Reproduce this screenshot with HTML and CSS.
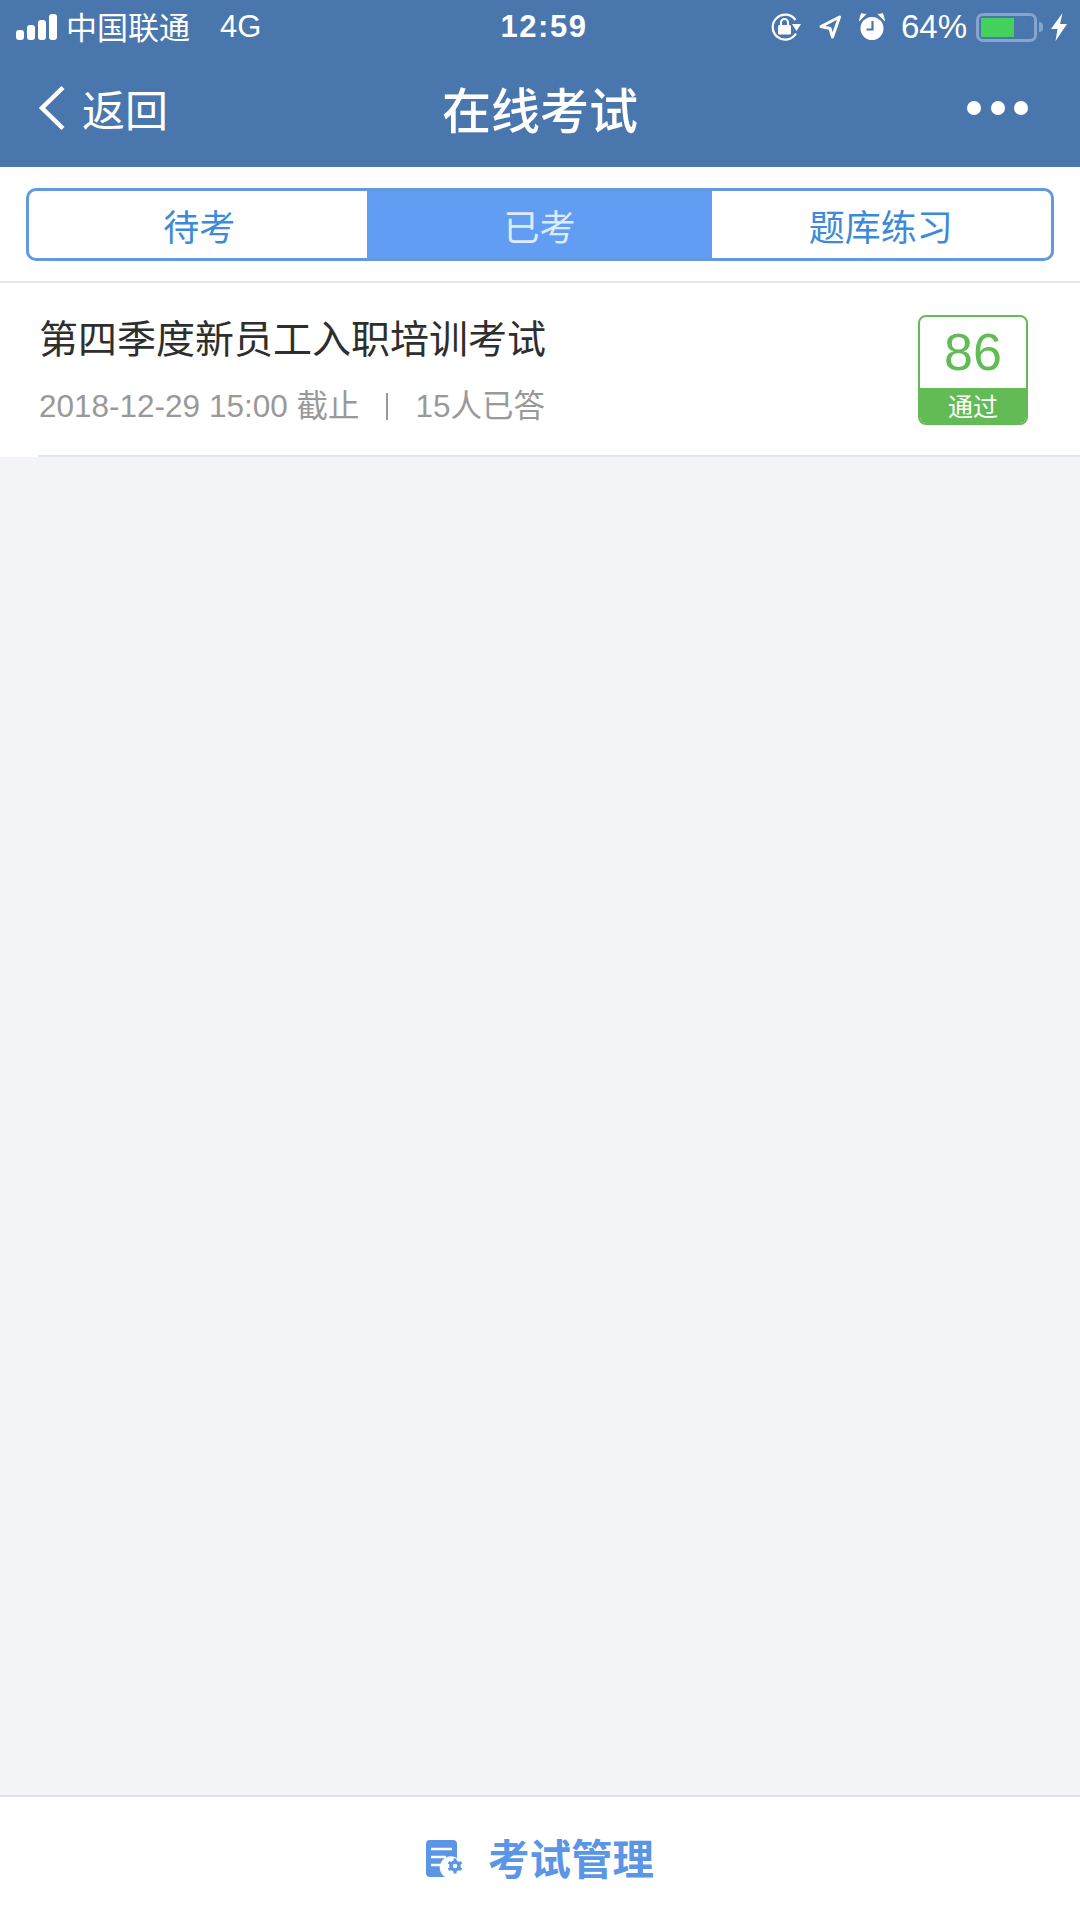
FILE: index.html
```html
<!DOCTYPE html>
<html lang="zh-CN">
<head>
    <meta charset="UTF-8">
    <meta name="viewport" content="width=device-width, initial-scale=1.0">
    <title>在线考试</title>
    <link rel="stylesheet" href="styles.css">
</head>
<body>
    <div class="app">
        <header class="header">
            <div class="status-bar">
                <div class="status-left">
                    <div class="signal">
                        <span class="signal-bar bar-1"></span>
                        <span class="signal-bar bar-2"></span>
                        <span class="signal-bar bar-3"></span>
                        <span class="signal-bar bar-4"></span>
                    </div>
                    <span class="carrier">中国联通</span>
                    <span class="network">4G</span>
                </div>
                <div class="status-time">12:59</div>
                <div class="status-right">
                    <svg class="icon-lock" viewBox="0 0 30 28">
                        <path d="M25 20.500A12.500 12.500 0 1 1 24.500 7" fill="none" stroke="#fff" stroke-width="2.200"/>
                        <path d="M21 11h9l-4.500 7z" fill="#fff"/>
                        <rect x="7" y="12" width="13" height="9.500" rx="1.500" fill="#fff"/>
                        <path d="M10 12V9.500a3.500 3.500 0 0 1 7 0V12" fill="none" stroke="#fff" stroke-width="2"/>
                    </svg>
                    <svg class="icon-location" viewBox="0 0 24 26">
                        <path d="M21.500 3L3 12.500l9 2 2.500 8.500z" fill="none" stroke="#fff" stroke-width="3" stroke-linejoin="round"/>
                    </svg>
                    <svg class="icon-alarm" viewBox="0 0 26 28">
                        <circle cx="13" cy="15.500" r="11.500" fill="#fff"/>
                        <path d="M1 6.500L6 1.500 2.500 1z M25 6.500L20 1.500 23.500 1z" fill="#fff" stroke="#fff" stroke-width="1.500"/>
                        <path d="M13.500 8v8.500H7.500" fill="none" stroke="#4a76ae" stroke-width="2.200"/>
                    </svg>
                    <span class="battery-text">64%</span>
                    <div class="battery">
                        <div class="battery-fill"></div>
                    </div>
                    <span class="battery-tip"></span>
                    <svg class="icon-bolt" viewBox="0 0 16 28">
                        <path d="M11.500 0L0 16h6.500L4.500 28 16 11H9z" fill="#fff"/>
                    </svg>
                </div>
            </div>
            <nav class="nav-bar">
                <div class="nav-back">
                    <svg class="icon-back" viewBox="0 0 28 46">
                        <path d="M25 2.500L4 23 25 43.500" fill="none" stroke="#fff" stroke-width="4.500"/>
                    </svg>
                    <span>返回</span>
                </div>
                <div class="nav-title">在线考试</div>
                <div class="nav-more">
                    <span class="dot"></span>
                    <span class="dot"></span>
                    <span class="dot"></span>
                </div>
            </nav>
        </header>

        <div class="tabs-wrap">
            <div class="tabs">
                <div class="tab">待考</div>
                <div class="tab tab-active">已考</div>
                <div class="tab">题库练习</div>
            </div>
        </div>

        <div class="exam-list">
            <div class="exam-item">
                <div class="exam-info">
                    <div class="exam-title">第四季度新员工入职培训考试</div>
                    <div class="exam-meta">
                        <span>2018-12-29 15:00 截止</span>
                        <span class="meta-sep"></span>
                        <span>15人已答</span>
                    </div>
                </div>
                <div class="score">
                    <div class="score-num">86</div>
                    <div class="score-label">通过</div>
                </div>
            </div>
        </div>

        <div class="content"></div>

        <footer class="footer">
            <svg class="icon-manage" viewBox="0 0 38 38">
                <path d="M4 0h23a4 4 0 0 1 4 4v14a10 10 0 0 0-12 19H4a4 4 0 0 1-4-4V4a4 4 0 0 1 4-4z" fill="#5b96e6"/>
                <path d="M5 9h21M5 17h15M5 25h10" stroke="#fff" stroke-width="2.500" fill="none"/>
                <path d="M29 21v-2.500M29 33.500V31M24.700 23.500l-2.200-1.300M35.500 29.800l-2.200-1.300M24.700 28.500l-2.200 1.300M35.500 22.200l-2.200 1.300" stroke="#5b96e6" stroke-width="3" fill="none"/>
                <circle cx="29" cy="26" r="4" fill="none" stroke="#5b96e6" stroke-width="3.500"/>
            </svg>
            <span class="footer-text">考试管理</span>
        </footer>
    </div>
</body>
</html>
```

FILE: styles.css
```css
* {
    margin: 0;
    padding: 0;
    box-sizing: border-box;
}

body {
    font-family: "Liberation Sans", "Noto Sans CJK SC", sans-serif;
    background: #f3f4f7;
}

.app {
    width: 1080px;
    height: 1920px;
    display: flex;
    flex-direction: column;
}

.header {
    height: 167px;
    background: #4a76ae;
    color: #fff;
}

.status-bar {
    height: 54px;
    padding: 0 13px 0 16px;
    display: grid;
    grid-template-columns: 1fr auto 1fr;
    align-items: center;
}

.status-left {
    display: flex;
    align-items: center;
    font-size: 31px;
}

.signal {
    display: flex;
    align-items: flex-end;
    gap: 3px;
    height: 26px;
    margin-right: 9px;
}

.signal-bar {
    width: 8px;
    background: #fff;
    border-radius: 3px;
}

.bar-1 { height: 10px; }
.bar-2 { height: 15px; }
.bar-3 { height: 20px; }
.bar-4 { height: 26px; }

.carrier {
    margin-bottom: 4px;
}

.network {
    margin-left: 30px;
}

.status-time {
    margin-left: 5px;
    font-size: 31px;
    font-weight: 700;
    letter-spacing: 1.500px;
}

.status-right {
    display: flex;
    align-items: center;
    justify-content: flex-end;
    font-size: 33px;
}

.icon-lock {
    width: 30px;
    height: 28px;
    margin-right: 17px;
}

.icon-location {
    width: 24px;
    height: 26px;
    margin-right: 17px;
}

.icon-alarm {
    width: 26px;
    height: 28px;
    margin-right: 16px;
}

.battery {
    width: 61px;
    height: 29px;
    margin-left: 9px;
    padding: 2px;
    border: 3px solid #86a5cd;
    border-radius: 7px;
}

.battery-fill {
    width: 33px;
    height: 100%;
    background: #43d15c;
}

.battery-tip {
    width: 4px;
    height: 10px;
    margin-left: 2px;
    background: #86a5cd;
    border-radius: 0 4px 4px 0;
}

.icon-bolt {
    width: 16px;
    height: 28px;
    margin-left: 8px;
}

.nav-bar {
    height: 113px;
    padding: 0 38px 6px;
    display: grid;
    grid-template-columns: 1fr auto 1fr;
    align-items: center;
}

.nav-back {
    display: flex;
    align-items: center;
    gap: 16px;
    font-size: 43px;
}

.icon-back {
    width: 28px;
    height: 46px;
}

.nav-title {
    font-size: 49px;
    font-weight: 500;
}

.nav-more {
    margin-right: 14px;
    display: flex;
    justify-content: flex-end;
    gap: 9.500px;
}

.dot {
    width: 14px;
    height: 14px;
    background: #fff;
    border-radius: 50%;
}

.tabs-wrap {
    padding: 21px 26px 20px;
    background: #fff;
    border-bottom: 2px solid #e6e7eb;
}

.tabs {
    height: 73px;
    display: grid;
    grid-template-columns: repeat(3, 1fr);
    border: 3px solid #6299e0;
    border-radius: 10px;
    overflow: hidden;
}

.tab {
    display: flex;
    align-items: center;
    justify-content: center;
    font-size: 36px;
    color: #3d8bd8;
}

.tab-active {
    margin: 0 -2px 0 -3px;
    background: #619df2;
    color: #dfeafb;
}

.exam-list {
    padding-left: 38px;
    background: #fff;
}

.exam-item {
    height: 174px;
    padding-right: 52px;
    display: flex;
    justify-content: space-between;
    border-bottom: 2px solid #e4e5ea;
}

.exam-info {
    margin-left: 1px;
}

.exam-title {
    margin-top: 32px;
    font-size: 39px;
    line-height: 50px;
    color: #2e2e2e;
}

.exam-meta {
    margin-top: 21px;
    display: flex;
    align-items: center;
    font-size: 31.500px;
    line-height: 40px;
    color: #999;
}

.meta-sep {
    width: 2px;
    height: 27px;
    margin: 0 27px;
    background: #999;
}

.score {
    width: 110px;
    height: 110px;
    margin-top: 32px;
    display: flex;
    flex-direction: column;
    border: 2px solid #62bb55;
    border-radius: 8px;
    overflow: hidden;
}

.score-num {
    flex: 1;
    display: flex;
    align-items: center;
    justify-content: center;
    padding-bottom: 2px;
    font-size: 52px;
    color: #62bb55;
}

.score-label {
    height: 35px;
    display: flex;
    align-items: center;
    justify-content: center;
    padding-bottom: 2px;
    font-size: 25px;
    background: #62bb55;
    color: #fff;
}

.content {
    flex: 1;
}

.footer {
    height: 125px;
    display: flex;
    align-items: center;
    justify-content: center;
    gap: 24px;
    background: #fff;
    border-top: 2px solid #e2e3e8;
}

.icon-manage {
    width: 38px;
    height: 38px;
}

.footer-text {
    margin-bottom: 4px;
    font-size: 41.500px;
    font-weight: 700;
    color: #5b96e6;
}
```
